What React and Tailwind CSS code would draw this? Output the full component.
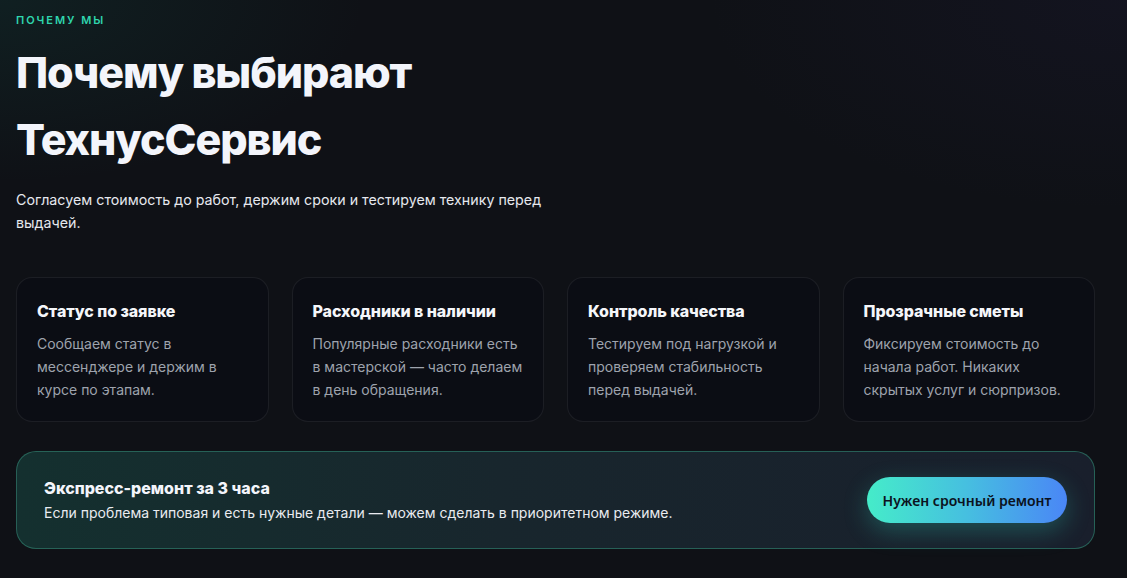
export default function App() {
  const cards = [
    { t: "Статус по заявке", d: "Сообщаем статус в мессенджере и держим в курсе по этапам." },
    { t: "Расходники в наличии", d: "Популярные расходники есть в мастерской — часто делаем в день обращения." },
    { t: "Контроль качества", d: "Тестируем под нагрузкой и проверяем стабильность перед выдачей." },
    { t: "Прозрачные сметы", d: "Фиксируем стоимость до начала работ. Никаких скрытых услуг и сюрпризов." },
  ];
  return (
    <div
      className="min-h-[578px] w-full bg-[#0f1116] text-white"
      style={{
        fontFamily: "Inter, 'Noto Sans', sans-serif",
        backgroundImage:
          "radial-gradient(ellipse 520px 260px at 0% 0%, rgba(20,90,80,0.2), transparent 70%), radial-gradient(ellipse 600px 300px at 100% 0%, rgba(50,40,100,0.12), transparent 70%)",
      }}
    >
      <div className="pl-4 pr-8 pt-[13px] pb-[29px]">
        <div className="text-[11px] font-semibold tracking-[0.18em] text-[#2fd6ae] leading-[14px]">ПОЧЕМУ МЫ</div>
        <h1 className="mt-[12px] text-[43px] font-extrabold leading-[67px] tracking-[-0.025em] text-[#f3f5fb] max-w-[440px]">
          Почему выбирают ТехнусСервис
        </h1>
        <p className="mt-[15px] max-w-[545px] text-[14.25px] leading-[23px] text-[#e6e8ee]">
          Согласуем стоимость до работ, держим сроки и тестируем технику перед выдачей.
        </p>
        <div className="mt-[43px] grid grid-cols-4 gap-[23px]">
          {cards.map((c) => (
            <div key={c.t} className="h-[145px] rounded-2xl border border-white/[0.07] bg-[#0b0d14] px-5 pt-[22px]">
              <div className="text-[16px] font-extrabold leading-[22px] text-[#f5f6fa] tracking-[-0.005em]">{c.t}</div>
              <div className="mt-[10px] text-[14px] leading-[23px] text-[#9ea3ad]">{c.d}</div>
            </div>
          ))}
        </div>
        <div
          className="mt-[29px] flex h-[98px] items-center justify-between rounded-[20px] border border-[#2a6f62]/80 pl-[27px] pr-[27px]"
          style={{ backgroundImage: "linear-gradient(90deg, #14302f 0%, #18262d 45%, #191f2c 100%)" }}
        >
          <div>
            <div className="text-[16px] font-extrabold leading-[22px] text-[#f3f5fb]">Экспресс-ремонт за 3 часа</div>
            <div className="mt-[4px] text-[14px] leading-[20px] text-[#e9ebf0]">
              Если проблема типовая и есть нужные детали — можем сделать в приоритетном режиме.
            </div>
          </div>
          <button
            className="h-[46px] w-[200px] rounded-full text-[14px] font-semibold text-[#0b1220] shadow-[0_8px_24px_rgba(45,212,191,0.28)]"
            style={{
              fontFamily: "'Noto Sans', Roboto, sans-serif",
              backgroundImage: "linear-gradient(90deg, #45ecc9 0%, #46bfe0 50%, #4a86f6 100%)",
            }}
          >
            Нужен срочный ремонт
          </button>
        </div>
      </div>
    </div>
  );
}
